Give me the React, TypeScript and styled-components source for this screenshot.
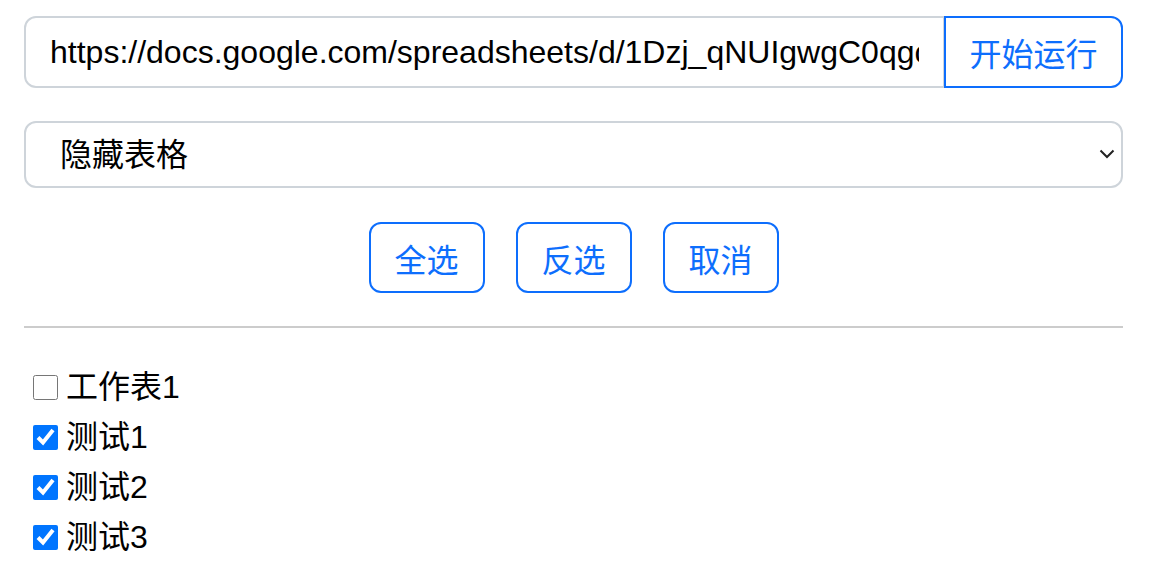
import React, { useState } from "react";
import styled, { createGlobalStyle } from "styled-components";

const Global = createGlobalStyle`
  html, body { margin: 0; padding: 0; background: #fff; }
  body { font-family: "Liberation Sans", "Noto Sans CJK SC", Arial, sans-serif; color: #000; }
  * { box-sizing: border-box; }
`;

const Page = styled.div`
  width: 1099px;
  margin: 16px 0 0 24px;
  display: flex;
  flex-direction: column;
`;

const InputGroup = styled.div`
  display: flex;
  height: 72px;
`;

const UrlInput = styled.input`
  flex: 1;
  min-width: 0;
  height: 72px;
  padding: 0 24px;
  font: 32px "Liberation Sans", "Noto Sans CJK SC", Arial, sans-serif;
  color: #000;
  border: 2px solid #ced4da;
  border-radius: 12px 0 0 12px;
  outline: none;
  background: #fff;
`;

const RunButton = styled.button`
  height: 72px;
  width: 179px;
  margin-left: -1px;
  padding: 0;
  font: 32px "Liberation Sans", "Noto Sans CJK SC", sans-serif;
  color: #0d6efd;
  background: #fff;
  border: 2px solid #0d6efd;
  border-radius: 0 12px 12px 0;
  cursor: pointer;
  position: relative;
  z-index: 1;
`;

const SelectWrap = styled.div`
  position: relative;
  margin-top: 33px;
  height: 67px;
`;

const Select = styled.select`
  appearance: none;
  -webkit-appearance: none;
  width: 100%;
  height: 67px;
  padding: 0 60px 0 34px;
  font: 32px "Liberation Sans", "Noto Sans CJK SC", sans-serif;
  color: #000;
  background: #fff;
  border: 2px solid #ced4da;
  border-radius: 12px;
  outline: none;
`;

const Chevron = styled.svg`
  position: absolute;
  right: 8px;
  top: 28px;
  width: 16px;
  height: 10px;
  pointer-events: none;
`;

const ButtonRow = styled.div`
  display: flex;
  justify-content: center;
  gap: 31px;
  margin-top: 34px;
`;

const OutlineButton = styled.button`
  width: 116px;
  height: 71px;
  padding: 0;
  font: 32px "Liberation Sans", "Noto Sans CJK SC", sans-serif;
  color: #0d6efd;
  background: #fff;
  border: 2px solid #0d6efd;
  border-radius: 12px;
  cursor: pointer;
`;

const Divider = styled.hr`
  margin: 33px 0 0;
  border: none;
  border-top: 2px solid #cccccc;
  height: 0;
`;

const List = styled.div`
  display: flex;
  flex-direction: column;
  margin-top: 34px;
`;

const Row = styled.label`
  display: flex;
  align-items: center;
  height: 50px;
  font-size: 32px;
  line-height: 50px;
`;

const Check = styled.input`
  width: 25px;
  height: 25px;
  margin: 0 8px 0 9px;
  accent-color: #0075ff;
`;

const sheets = [
  { name: "工作表1", checked: false },
  { name: "测试1", checked: true },
  { name: "测试2", checked: true },
  { name: "测试3", checked: true },
];

export default function App() {
  const [items, setItems] = useState(sheets);
  return (
    <>
      <Global />
      <Page>
        <InputGroup>
          <UrlInput
            readOnly
            value="https://docs.google.com/spreadsheets/d/1Dzj_qNUIgwgC0qgcXkV2pLmA9/edit"
          />
          <RunButton>开始运行</RunButton>
        </InputGroup>
        <SelectWrap>
          <Select defaultValue="hide">
            <option value="hide">隐藏表格</option>
            <option value="show">显示表格</option>
          </Select>
          <Chevron viewBox="0 0 16 10">
            <path d="M1.5 1.5 L8 8 L14.5 1.5" fill="none" stroke="#222" strokeWidth="2" />
          </Chevron>
        </SelectWrap>
        <ButtonRow>
          <OutlineButton>全选</OutlineButton>
          <OutlineButton>反选</OutlineButton>
          <OutlineButton>取消</OutlineButton>
        </ButtonRow>
        <Divider />
        <List>
          {items.map((it, i) => (
            <Row key={it.name}>
              <Check
                type="checkbox"
                checked={it.checked}
                onChange={() =>
                  setItems(items.map((x, j) => (j === i ? { ...x, checked: !x.checked } : x)))
                }
              />
              {it.name}
            </Row>
          ))}
        </List>
      </Page>
    </>
  );
}
